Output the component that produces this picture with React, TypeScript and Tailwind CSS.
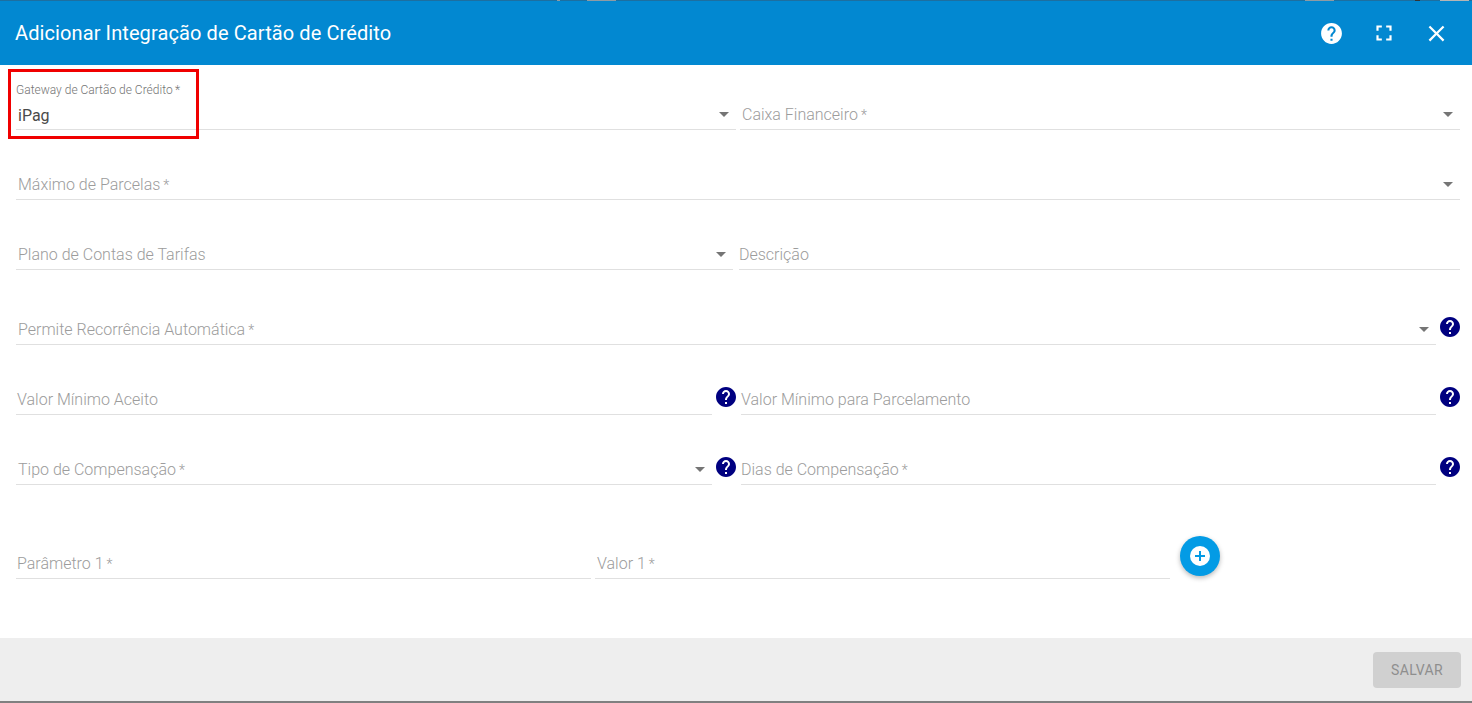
import React from "react";

const helpPath =
  "M12 2C6.48 2 2 6.48 2 12s4.48 10 10 10 10-4.48 10-10S17.52 2 12 2zm1 17h-2v-2h2v2zm2.07-7.75l-.9.92C13.45 12.9 13 13.5 13 15h-2v-.5c0-1.1.45-2.1 1.17-2.83l1.24-1.26c.37-.36.59-.86.59-1.41 0-1.1-.9-2-2-2s-2 .9-2 2H8c0-2.21 1.79-4 4-4s4 1.79 4 4c0 .88-.36 1.68-.93 2.25z";

const Help = ({ className }: { className: string }) => (
  <svg viewBox="0 0 24 24" className={className} fill="currentColor">
    <path d={helpPath} />
  </svg>
);

const Field = ({
  label,
  className,
  select,
  required,
  inset = "pl-[2px]",
}: {
  label: string;
  className: string;
  select?: boolean;
  required?: boolean;
  inset?: string;
}) => (
  <div className={`flex h-[32px] items-center border-b border-[#e0e0e0] pt-[2px] text-[16px] font-light text-[#9c9c9c] ${inset} ${className}`}>
    <span className="flex-1 whitespace-nowrap">
      {label}
      {required && <span className="ml-[3px] text-[14px]">*</span>}
    </span>
    {select && <span className="mb-[1px] mr-[7px] h-0 w-0 border-x-[5px] border-t-[5px] border-x-transparent border-t-[#757575]" />}
  </div>
);

const FieldHelp = ({ className = "" }: { className?: string }) => (
  <Help className={`h-[24px] w-[24px] shrink-0 self-start text-[#000080] ${className}`} />
);

export default function App() {
  return (
    <div className="relative flex h-[703px] w-[1472px] flex-col overflow-hidden bg-white font-['Roboto',sans-serif]">
      {/* Header */}
      <header className="relative flex h-[65px] shrink-0 items-center border-t border-[#1d6fa0] bg-[#0288d1] pl-[15px] pr-[22px] text-white">
        {/* Bits of the page behind the dialog, showing along the top edge */}
        <span className="absolute left-[557px] top-[-1px] h-px w-[3px] bg-[#8f9ba3]" />
        <span className="absolute left-[587px] top-[-1px] h-px w-[29px] bg-[#8f9ba3]" />
        <span className="absolute left-[1305px] top-[-1px] h-px w-[29px] bg-[#8f9ba3]" />
        <span className="absolute left-[1415px] top-[-1px] h-px w-[5px] bg-[#333333]" />
        <span className="absolute left-[1440px] top-[-1px] h-px w-[29px] bg-[#b5b5b5]" />
        <h1 className="flex-1 text-[20px] font-[450] tracking-[0.1px]">Adicionar Integração de Cartão de Crédito</h1>
        <Help className="h-[25px] w-[25px]" />
        <svg viewBox="0 0 24 24" className="ml-[27px] h-[26px] w-[26px]" fill="currentColor">
          <path d="M7 14H5v5h5v-2H7v-3zm-2-4h2V7h3V5H5v5zm12 7h-3v2h5v-5h-2v3zM14 5v2h3v3h2V5h-5z" />
        </svg>
        <svg viewBox="0 0 24 24" className="ml-[26px] h-[27px] w-[27px]" fill="currentColor">
          <path d="M19 6.41L17.59 5 12 10.59 6.41 5 5 6.41 10.59 12 5 17.59 6.41 19 12 13.41 17.59 19 19 17.59 13.41 12 19 6.41z" />
        </svg>
      </header>

      {/* Form */}
      <main className="flex-1 pl-[16px]">
        <div className="flex h-[65px] items-end gap-[4px]">
          <div className="relative h-[32px] w-[720px]">
            <Field label="" select className="w-full" />
            <span className="absolute left-0 top-[-17px] text-[12px] font-light text-[#757575]">Gateway de Cartão de Crédito{"\u2009"}*</span>
            <span className="absolute left-[2px] top-[6px] text-[16px] text-[#4a4a4a]">iPag</span>
          </div>
          <Field label="Caixa Financeiro" required select className="w-[720px]" />
        </div>
        <div className="flex h-[70px] items-end">
          <Field label="Máximo de Parcelas" required select className="w-[1444px]" />
        </div>
        <div className="flex h-[70px] items-end gap-[6px]">
          <Field label="Plano de Contas de Tarifas" select className="w-[717px]" />
          <Field label="Descrição" inset="" className="w-[721px]" />
        </div>
        <div className="flex h-[75px] items-end gap-[2px]">
          <Field label="Permite Recorrência Automática" required select className="w-[1420px]" />
          <FieldHelp className="mt-[45px]" />
        </div>
        <div className="flex h-[70px] items-end">
          <Field label="Valor Mínimo Aceito" inset="pl-[1px]" className="w-[696px]" />
          <FieldHelp className="ml-[2px] mt-[40px]" />
          <Field label="Valor Mínimo para Parcelamento" inset="" className="ml-[3px] w-[695px]" />
          <FieldHelp className="ml-[2px] mt-[40px]" />
        </div>
        <div className="flex h-[70px] items-end">
          <Field label="Tipo de Compensação" required select className="w-[696px]" />
          <FieldHelp className="ml-[2px] mt-[40px]" />
          <Field label="Dias de Compensação" required inset="" className="ml-[3px] w-[695px]" />
          <FieldHelp className="ml-[2px] mt-[40px]" />
        </div>
        <div className="flex h-[94px] items-end gap-[4px]">
          <Field label="Parâmetro 1" required inset="pl-[1px]" className="w-[575px]" />
          <Field label="Valor 1" required inset="pl-[2px]" className="w-[575px]" />
          <button className="mb-[3px] ml-[6px] flex h-[40px] w-[40px] items-center justify-center rounded-full bg-[#039be5] shadow-[0_2px_5px_rgba(0,0,0,0.28)]">
            <svg viewBox="0 0 20 20" className="h-[20px] w-[20px]">
              <circle cx="10" cy="10" r="10" fill="#ffffff" />
              <path d="M10 5v10M5 10h10" stroke="#039be5" strokeWidth="2" />
            </svg>
          </button>
        </div>
      </main>

      {/* Footer */}
      <footer className="flex h-[65px] shrink-0 items-start justify-end border-b-2 border-[#808080] bg-[#eeeeee] pr-[11px] pt-[14px]">
        <button className="flex h-[36px] w-[88px] items-center justify-center rounded-[4px] bg-[#d0d0d0] text-[14px] tracking-[0.3px] text-[#8e8e8e]">
          SALVAR
        </button>
      </footer>

      {/* Red highlight drawn over the first field */}
      <div className="pointer-events-none absolute left-[8px] top-[69px] h-[70px] w-[191px] border-[3px] border-[#f00000]" />
    </div>
  );
}
